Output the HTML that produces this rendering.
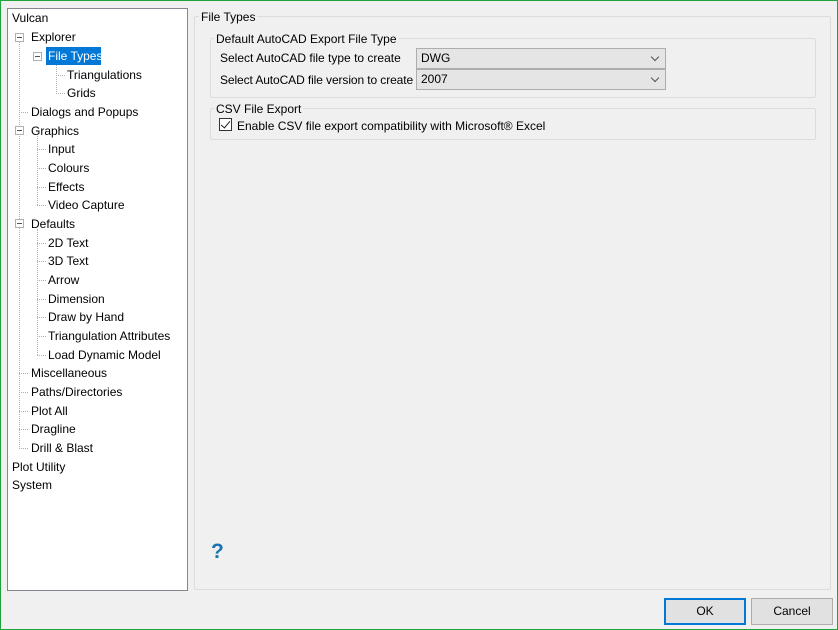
<!DOCTYPE html>
<html><head><style>
*{margin:0;padding:0;box-sizing:border-box}
body{width:838px;height:630px;background:#f0f0f0;font-family:"Liberation Sans",sans-serif;font-size:12px;color:#000;position:relative;overflow:hidden}
.a{position:absolute;white-space:nowrap}
.t{position:absolute;white-space:nowrap;line-height:16px;height:16px}
.v{position:absolute;border-left:1px dotted #b0b0b0;width:0}
.h{position:absolute;border-top:1px dotted #b0b0b0;height:0}
.box{position:absolute;width:9px;height:9px;border:1px solid #b0b0b0;background:#fff}
.box:after{content:"";position:absolute;left:1px;top:3px;width:5px;height:1px;background:#555}
.g{position:absolute;border:1px solid #dcdcdc;border-radius:2px}
.cb{position:absolute;background:#e5e5e5;border:1px solid #adadad;height:21px;width:250px;padding-left:4px;line-height:19px}
.cb:after{content:"";position:absolute;right:7px;top:5px;width:5px;height:5px;border-right:1px solid #555;border-bottom:1px solid #555;transform:rotate(45deg)}
.btn{position:absolute;top:598px;height:27px;width:82px;background:#e1e1e1;border:1px solid #adadad;text-align:center;line-height:25px}
</style></head><body>
<div class="a" style="left:0;top:0;width:838px;height:630px;border:1px solid #1ea23a"></div>
<div class="a" style="left:7px;top:8px;width:181px;height:583px;background:#fff;border:1px solid #828790"></div>
<div class="v" style="left:19px;top:42px;height:407px"></div>
<div class="v" style="left:56px;top:62px;height:32px"></div>
<div class="h" style="left:56px;top:75px;width:9px"></div>
<div class="h" style="left:56px;top:93px;width:9px"></div>
<div class="h" style="left:19px;top:112px;width:9px"></div>
<div class="v" style="left:37px;top:136px;height:69px"></div>
<div class="h" style="left:37px;top:149px;width:9px"></div>
<div class="h" style="left:37px;top:168px;width:9px"></div>
<div class="h" style="left:37px;top:187px;width:9px"></div>
<div class="h" style="left:37px;top:205px;width:9px"></div>
<div class="v" style="left:37px;top:229px;height:126px"></div>
<div class="h" style="left:37px;top:243px;width:9px"></div>
<div class="h" style="left:37px;top:261px;width:9px"></div>
<div class="h" style="left:37px;top:280px;width:9px"></div>
<div class="h" style="left:37px;top:299px;width:9px"></div>
<div class="h" style="left:37px;top:317px;width:9px"></div>
<div class="h" style="left:37px;top:336px;width:9px"></div>
<div class="h" style="left:37px;top:355px;width:9px"></div>
<div class="h" style="left:19px;top:373px;width:9px"></div>
<div class="h" style="left:19px;top:392px;width:9px"></div>
<div class="h" style="left:19px;top:411px;width:9px"></div>
<div class="h" style="left:19px;top:429px;width:9px"></div>
<div class="h" style="left:19px;top:448px;width:9px"></div>
<div class="box" style="left:15px;top:33px"></div>
<div class="box" style="left:33px;top:52px"></div>
<div class="box" style="left:15px;top:126px"></div>
<div class="box" style="left:15px;top:219px"></div>
<div class="a" style="left:46px;top:47px;width:55px;height:18px;background:#0078d7"></div>
<div class="t" style="left:12px;top:10px">Vulcan</div>
<div class="t" style="left:31px;top:29px">Explorer</div>
<div class="t" style="left:48px;top:48px;color:#fff">File Types</div>
<div class="t" style="left:67px;top:67px">Triangulations</div>
<div class="t" style="left:67px;top:85px">Grids</div>
<div class="t" style="left:31px;top:104px">Dialogs and Popups</div>
<div class="t" style="left:31px;top:123px">Graphics</div>
<div class="t" style="left:48px;top:141px">Input</div>
<div class="t" style="left:48px;top:160px">Colours</div>
<div class="t" style="left:48px;top:179px">Effects</div>
<div class="t" style="left:48px;top:197px">Video Capture</div>
<div class="t" style="left:31px;top:216px">Defaults</div>
<div class="t" style="left:48px;top:235px">2D Text</div>
<div class="t" style="left:48px;top:253px">3D Text</div>
<div class="t" style="left:48px;top:272px">Arrow</div>
<div class="t" style="left:48px;top:291px">Dimension</div>
<div class="t" style="left:48px;top:309px">Draw by Hand</div>
<div class="t" style="left:48px;top:328px">Triangulation Attributes</div>
<div class="t" style="left:48px;top:347px">Load Dynamic Model</div>
<div class="t" style="left:31px;top:365px">Miscellaneous</div>
<div class="t" style="left:31px;top:384px">Paths/Directories</div>
<div class="t" style="left:31px;top:403px">Plot All</div>
<div class="t" style="left:31px;top:421px">Dragline</div>
<div class="t" style="left:31px;top:440px">Drill &amp; Blast</div>
<div class="t" style="left:12px;top:459px">Plot Utility</div>
<div class="t" style="left:12px;top:477px">System</div>
<div class="g" style="left:194px;top:16px;width:637px;height:574px"></div>
<div class="t" style="left:199px;top:9px;background:#f0f0f0;padding:0 2px">File Types</div>
<div class="g" style="left:210px;top:38px;width:606px;height:60px"></div>
<div class="t" style="left:214px;top:31px;background:#f0f0f0;padding:0 2px">Default AutoCAD Export File Type</div>
<div class="t" style="left:220px;top:50px">Select AutoCAD file type to create</div>
<div class="t" style="left:220px;top:72px;letter-spacing:-0.1px">Select AutoCAD file version to create</div>
<div class="cb" style="left:416px;top:48px">DWG</div>
<div class="cb" style="left:416px;top:69px">2007</div>
<div class="g" style="left:210px;top:108px;width:606px;height:32px"></div>
<div class="t" style="left:214px;top:101px;background:#f0f0f0;padding:0 2px">CSV File Export</div>
<div class="a" style="left:219px;top:118px;width:13px;height:13px;border:1px solid #333;background:#fff"></div>
<div class="a" style="left:223px;top:119px;width:5px;height:9px;border-right:1.5px solid #222;border-bottom:1.5px solid #222;transform:rotate(40deg)"></div>
<div class="t" style="left:237px;top:118px">Enable CSV file export compatibility with Microsoft® Excel</div>
<div class="a" style="left:211px;top:540px;font-size:21px;font-weight:bold;color:#1a74b0">?</div>
<div class="btn" style="left:664px;border:2px solid #0078d7;line-height:23px">OK</div>
<div class="btn" style="left:751px">Cancel</div>
</body></html>
